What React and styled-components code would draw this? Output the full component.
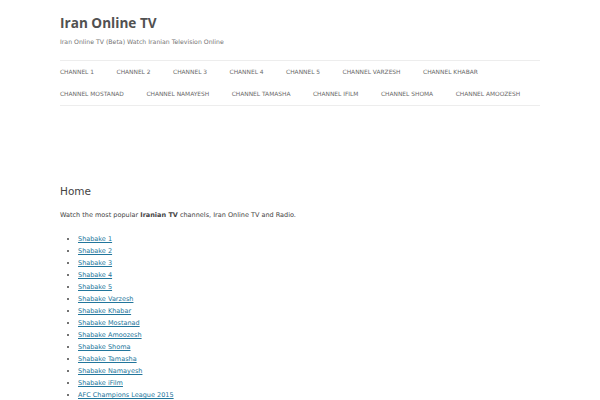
import styled, { createGlobalStyle } from 'styled-components';

const GlobalStyle = createGlobalStyle`
  html, body {
    margin: 0;
    padding: 0;
    background: #fff;
  }
  body {
    font-family: "DejaVu Sans", sans-serif;
    color: #444;
  }
`;

const Site = styled.div`
  margin: 0 60px;
`;

const Header = styled.header`
  padding-top: 14px;
  & > .title {
    margin: 0;
    font-family: "Open Sans", "DejaVu Sans", sans-serif;
    font-size: 13.6px;
    line-height: 18px;
    font-weight: bold;
    color: #515151;
  }
  & > .description {
    margin: 4px 0 0;
    font-size: 6.2px;
    line-height: 12px;
    font-weight: normal;
    color: #757575;
  }
`;

const Nav = styled.nav`
  margin-top: 12px;
  border-top: 1px solid #ededed;
  border-bottom: 1px solid #ededed;
  & > ul {
    list-style: none;
    margin: 0;
    padding: 0;
    display: flex;
    flex-wrap: wrap;
    column-gap: 22.5px;
  }
`;

const NavItem = styled.li`
  line-height: 22px;
  font-size: 5.9px;
  text-transform: uppercase;
  color: #6a6a6a;
`;

const Main = styled.main`
  padding-top: 75px;
  & > h1 {
    margin: 0;
    font-size: 10.5px;
    line-height: 20px;
    font-weight: normal;
    color: #444;
  }
  & > p {
    margin: 8px 0 0;
    font-size: 6.5px;
    line-height: 12px;
  }
  & > ul {
    margin: 12px 0 0;
    padding-left: 18px;
    font-size: 6.5px;
    line-height: 12px;
  }
  & a {
    color: #21759b;
  }
`;

const channels = [
  'Channel 1', 'Channel 2', 'Channel 3', 'Channel 4', 'Channel 5',
  'Channel Varzesh', 'Channel Khabar', 'Channel Mostanad', 'Channel Namayesh',
  'Channel Tamasha', 'Channel iFilm', 'Channel Shoma', 'Channel Amoozesh',
];

const shows = [
  'Shabake 1', 'Shabake 2', 'Shabake 3', 'Shabake 4', 'Shabake 5',
  'Shabake Varzesh', 'Shabake Khabar', 'Shabake Mostanad', 'Shabake Amoozesh',
  'Shabake Shoma', 'Shabake Tamasha', 'Shabake Namayesh', 'Shabake iFilm',
  'AFC Champions League 2015',
];

export default function App() {
  return (
    <Site>
      <GlobalStyle />
      <Header>
        <h1 className="title">Iran Online TV</h1>
        <h2 className="description">Iran Online TV (Beta) Watch Iranian Television Online</h2>
      </Header>
      <Nav>
        <ul>
          {channels.map((c) => (
            <NavItem key={c}>{c}</NavItem>
          ))}
        </ul>
      </Nav>
      <Main>
        <h1>Home</h1>
        <p>
          Watch the most popular <strong>Iranian TV</strong> channels, Iran Online TV and Radio.
        </p>
        <ul>
          {shows.map((s) => (
            <li key={s}>
              <a href="#">{s}</a>
            </li>
          ))}
        </ul>
      </Main>
    </Site>
  );
}
